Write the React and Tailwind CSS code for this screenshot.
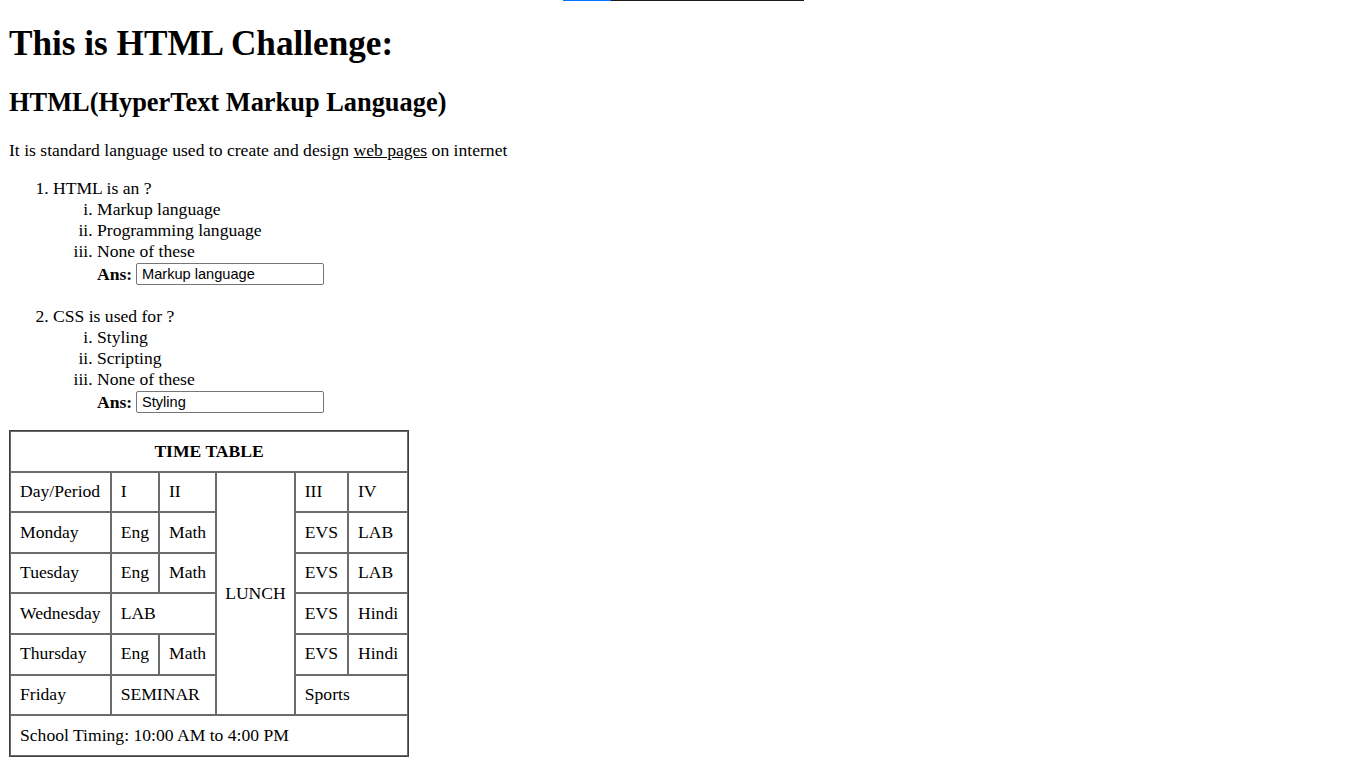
import React from 'react';

const questions = [
  {
    q: 'HTML is an ?',
    options: ['Markup language', 'Programming language', 'None of these'],
    ans: 'Markup language',
  },
  {
    q: 'CSS is used for ?',
    options: ['Styling', 'Scripting', 'None of these'],
    ans: 'Styling',
  },
];

const cell = 'border border-[#6b6b6b] px-[9px] pt-[8.5px] pb-[9.5px] text-left font-normal leading-[20.6px]';

const App = () => {
  return (
    <div className="relative min-h-screen bg-white px-2 font-['Liberation_Serif',serif] text-[17.6px] leading-[normal] text-black">
      {/* top progress line */}
      <div className="absolute left-[563px] top-0 flex h-px w-[241px]">
        <div className="w-[48px] bg-[#0075ff]"></div>
        <div className="flex-1 bg-[#1a1a1a]"></div>
      </div>

      <h1 className="pl-px pt-[25px] text-[35.2px] font-bold leading-[38px]">This is HTML Challenge:</h1>
      <h2 className="mt-[25px] pl-px text-[26.4px] font-bold leading-[28px]">HTML(HyperText Markup Language)</h2>
      <p className="mt-[24px] pl-px leading-[20px]">
        It is standard language used to create and design <a className="underline">web pages</a> on internet
      </p>

      <ol className="mt-[17px] list-decimal pl-[45px]">
        {questions.map((item, i) => (
          <li key={i} className="mb-[20px] leading-[22px]">
            {item.q}
            <ol className="list-[lower-roman] pl-[44px]">
              {item.options.map((opt) => (
                <li key={opt} className="leading-[21px]">{opt}</li>
              ))}
            </ol>
            <div className="flex h-[23px] items-center pl-[44px]">
              <span className="w-[39px] font-bold">Ans:</span>
              <input
                type="text"
                readOnly
                value={item.ans}
                className="h-[22px] w-[188px] rounded-[2px] border border-[#767676] px-[5px] font-['Liberation_Sans',sans-serif] text-[14.6px] leading-[normal] outline-none"
              />
            </div>
          </li>
        ))}
      </ol>

      <table className="ml-px mt-[-3px] border-separate border-spacing-0 border border-[#3f3f3f]">
        <tbody>
          <tr>
            <th colSpan={6} className={`${cell} text-center font-bold`} style={{ fontWeight: 700, textAlign: 'center' }}>
              TIME TABLE
            </th>
          </tr>
          <tr>
            <td className={cell}>Day/Period</td>
            <td className={cell}>I</td>
            <td className={cell}>II</td>
            <td rowSpan={6} className={`${cell} text-center`} style={{ textAlign: 'center', paddingLeft: 8, paddingRight: 8 }}>LUNCH</td>
            <td className={cell}>III</td>
            <td className={cell}>IV</td>
          </tr>
          <tr>
            <td className={cell}>Monday</td>
            <td className={cell}>Eng</td>
            <td className={cell}>Math</td>
            <td className={cell}>EVS</td>
            <td className={cell}>LAB</td>
          </tr>
          <tr>
            <td className={cell}>Tuesday</td>
            <td className={cell}>Eng</td>
            <td className={cell}>Math</td>
            <td className={cell}>EVS</td>
            <td className={cell}>LAB</td>
          </tr>
          <tr>
            <td className={cell}>Wednesday</td>
            <td colSpan={2} className={cell}>LAB</td>
            <td className={cell}>EVS</td>
            <td className={cell}>Hindi</td>
          </tr>
          <tr>
            <td className={cell}>Thursday</td>
            <td className={cell}>Eng</td>
            <td className={cell}>Math</td>
            <td className={cell}>EVS</td>
            <td className={cell}>Hindi</td>
          </tr>
          <tr>
            <td className={cell}>Friday</td>
            <td colSpan={2} className={cell}>SEMINAR</td>
            <td colSpan={2} className={cell}>Sports</td>
          </tr>
          <tr>
            <td colSpan={6} className={cell}>School Timing: 10:00 AM to 4:00 PM</td>
          </tr>
        </tbody>
      </table>
    </div>
  );
};

export default App;
